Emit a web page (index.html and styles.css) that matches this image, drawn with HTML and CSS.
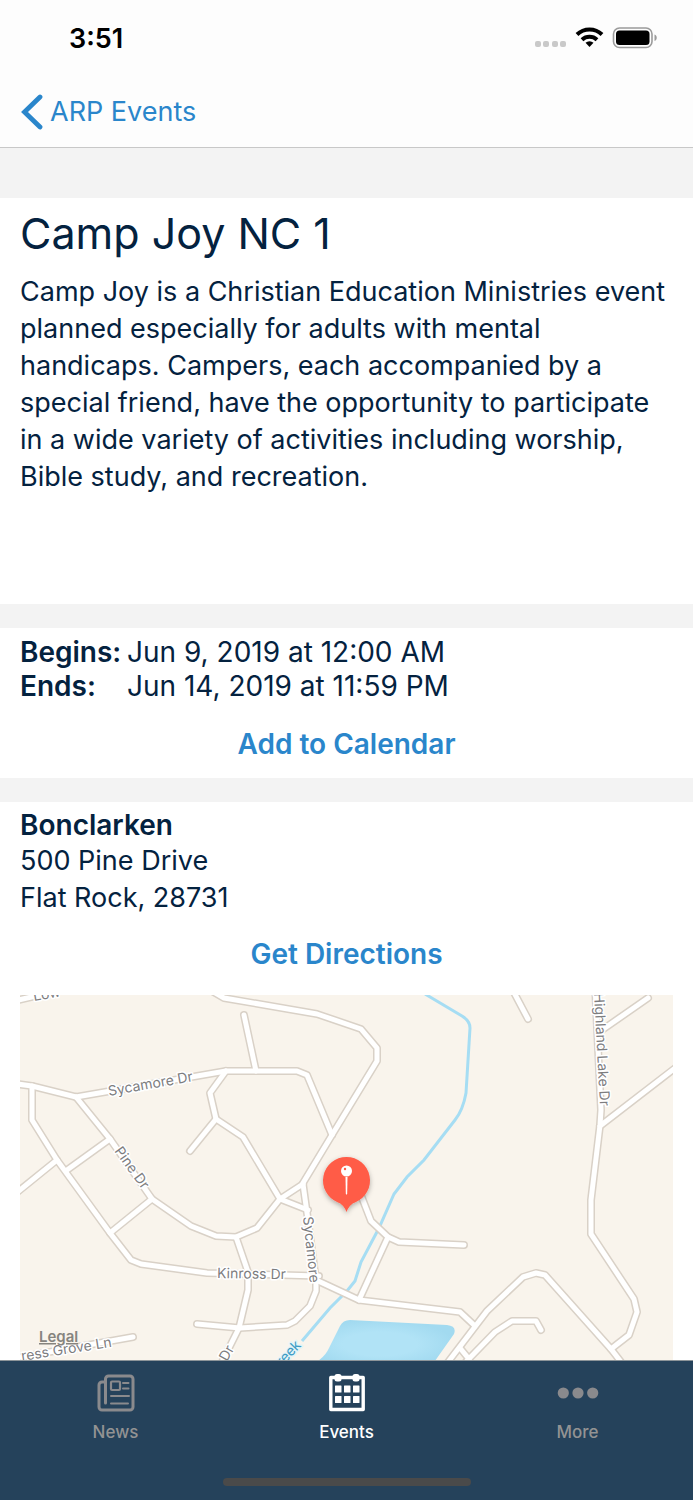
FILE: index.html
```html
<!DOCTYPE html>
<html lang="en">
<head>
    <meta charset="UTF-8">
    <meta name="viewport" content="width=device-width, initial-scale=1.0">
    <title>Camp Joy NC 1</title>
    <link rel="stylesheet" href="styles.css">
</head>
<body>
    <header class="top-bar">
        <div class="status-bar">
            <span class="time">3:51</span>
            <svg class="status-icons" width="124" height="24" viewBox="0 0 124 24" aria-hidden="true">
                <g fill="#c9c9c9">
                    <rect x="1" y="15" width="6" height="6" rx="2"/>
                    <rect x="9" y="15" width="6" height="6" rx="2"/>
                    <rect x="18" y="15" width="6" height="6" rx="2"/>
                    <rect x="26" y="15" width="6" height="6" rx="2"/>
                </g>
                <g fill="none" stroke="#000" stroke-width="4">
                    <path d="M43 8.5a18 18 0 0 1 25 0"/>
                    <path d="M48 13.8a11 11 0 0 1 15 0"/>
                </g>
                <path d="M55.500 21l-4-4.200a6 6 0 0 1 8 0z"/>
                <rect x="79.500" y="2" width="38.500" height="19.500" rx="6" fill="none" stroke="#9b9b9b" stroke-width="1.600"/>
                <rect x="82" y="4.500" width="33.500" height="14.500" rx="3.500"/>
                <path d="M120.500 8.500c3 1 3 5.500 0 6.500z" fill="#9b9b9b"/>
            </svg>
        </div>
        <nav class="nav-bar">
            <a href="#" class="back-link">
                <svg width="22" height="36" viewBox="0 0 22 36" aria-hidden="true">
                    <path d="M19 3L3.500 18L19 33" fill="none" stroke="#2a86cb" stroke-width="4.800" stroke-linecap="round" stroke-linejoin="miter"/>
                </svg>
                ARP Events
            </a>
        </nav>
    </header>

    <main>
        <section class="card about">
            <h1>Camp Joy NC 1</h1>
            <p>Camp Joy is a Christian Education Ministries event planned especially for adults with mental handicaps. Campers, each accompanied by a special friend, have the opportunity to participate in a wide variety of activities including worship, Bible study, and recreation.</p>
        </section>

        <section class="card dates">
            <dl>
                <dt>Begins:</dt>
                <dd>Jun 9, 2019 at 12:00 AM</dd>
                <dt>Ends:</dt>
                <dd>Jun 14, 2019 at 11:59 PM</dd>
            </dl>
            <button type="button" class="action">Add to Calendar</button>
        </section>

        <section class="card place">
            <h2>Bonclarken</h2>
            <address>500 Pine Drive<br>Flat Rock, 28731</address>
            <button type="button" class="action">Get Directions</button>

            <svg class="map" viewBox="20 995 653 366" preserveAspectRatio="xMidYMin slice" role="img" aria-label="Map">
                <defs>
                    <g id="roads">
                        <path d="M10 1002L70 988"/>
                        <path d="M205 987L224 998L317 1014L361 1029L377 1048V1061L332 1135L303 1183"/>
                        <path d="M244 1015L256 1071"/>
                        <path d="M10 1083L32 1086L76 1097L226 1071H297L307 1075L332 1135"/>
                        <path d="M32 1086V1120L57 1160L110 1233L131 1260L141 1264L207 1273L319 1276"/>
                        <path d="M10 1198L57 1160"/>
                        <path d="M76 1097L110 1139L152 1199L191 1226L216 1236L236 1237L257 1228L280 1199L303 1184"/>
                        <path d="M110 1139L67 1170"/>
                        <path d="M152 1199L110 1233"/>
                        <path d="M226 1071L210 1093L216 1119L190 1151"/>
                        <path d="M216 1119L243 1137L280 1199L308 1210"/>
                        <path d="M303 1184L308 1220L316 1280V1291L310 1306L295 1321L287 1325L240 1328L197 1324"/>
                        <path d="M236 1237L248 1272V1290L239 1328L218 1370"/>
                        <path d="M316 1280L359 1300L460 1312L475 1326"/>
                        <path d="M359 1300L388 1237"/>
                        <path d="M352 1172L371 1221L388 1237L399 1242L464 1245"/>
                        <path d="M510 985L528 1019"/>
                        <path d="M595 985L601 1110L600 1125L591 1200V1234L634 1299L637 1312L629 1335L611 1349"/>
                        <path d="M600 1126L683 1062"/>
                        <path d="M602 1030L648 998"/>
                        <path d="M442 1370L487 1311L523 1277L536 1273L545 1275L611 1349L628 1371"/>
                        <path d="M460 1348L469 1359"/>
                        <path d="M459 1369L495 1332L512 1321H536L541 1330"/>
                        <path d="M10 1359L133 1337"/>
                    </g>
                    <radialGradient id="pond">
                        <stop offset="0.500" stop-color="#b1e3f6"/>
                        <stop offset="1" stop-color="#a2daf0"/>
                    </radialGradient>
                    <filter id="pin-shadow" x="-30%" y="-30%" width="160%" height="160%">
                        <feDropShadow dx="0" dy="2" stdDeviation="2.500" flood-color="#000" flood-opacity="0.300"/>
                    </filter>
                </defs>

                <rect x="0" y="975" width="693" height="600" fill="#f9f4ec"/>
                <path d="M425 994L462 1016Q470 1021 470 1028L466 1093Q463 1110 455 1120L424 1160L407 1177L394 1194L379 1228L361 1262L355 1281L347 1291L330 1308L302 1341" fill="none" stroke="#a6ddf3" stroke-width="3"/>
                <path d="M350 1320L447 1325Q457 1326 454 1334L430 1368H305Q324 1360 329 1348L340 1326Q343 1320 350 1320Z" fill="url(#pond)"/>

                <use href="#roads" class="road-edge"/>
                <use href="#roads" class="road"/>

                <g class="street">
                    <text transform="translate(34 1001) rotate(-10)">Low</text>
                    <text transform="translate(109 1096) rotate(-10)">Sycamore Dr</text>
                    <text transform="translate(114 1151) rotate(54)">Pine Dr</text>
                    <text transform="translate(217 1278) rotate(1)">Kinross Dr</text>
                    <text transform="translate(303 1217) rotate(84)">Sycamore</text>
                    <text transform="translate(594 993) rotate(87)">Highland Lake Dr</text>
                    <text transform="translate(22 1361) rotate(-9)">ress Grove Ln</text>
                    <text transform="translate(227 1362) rotate(-61)">Dr</text>
                    <text class="water" transform="translate(282 1367) rotate(-47)">reek</text>
                </g>

                <g filter="url(#pin-shadow)">
                    <path d="M346.500 1157a23.500 23.500 0 0 1 9 45.200q-6 2-9 9.800q-3-7.800-9-9.800a23.500 23.500 0 0 1 9-45.200z" fill="#ff5b47"/>
                </g>
                <circle cx="346.500" cy="1171" r="5.500" fill="#fff"/>
                <circle cx="345" cy="1169" r="1.200" fill="#ff5b47"/>
                <path d="M345.500 1177h2l-.300 16.500-.700 1.500-.700-1.500z" fill="#fff"/>

                <a href="#"><text class="legal" x="39" y="1342">Legal</text></a>
            </svg>
        </section>
    </main>

    <nav class="tab-bar">
        <div class="tabs">
            <a href="#" class="tab">
                <svg width="38" height="38" viewBox="0 0 38 38" aria-hidden="true">
                    <g fill="none" stroke="#8a8a8d">
                        <path d="M8.500 29V5a3 3 0 0 1 3-3H33a3 3 0 0 1 3 3v28a3 3 0 0 1-3 3H5a3 3 0 0 1-3-3V11a3 3 0 0 1 3-3h3.500" stroke-width="3" stroke-linecap="round"/>
                        <rect x="14" y="7.500" width="9" height="8.500" rx="1" stroke-width="2.200"/>
                        <path d="M26 9h5.500M26 14.500h5.500M14 22h18M14 29.500h17" stroke-width="2" stroke-linecap="round"/>
                    </g>
                </svg>
                News
            </a>
            <a href="#" class="tab active" aria-current="page">
                <svg width="38" height="38" viewBox="0 0 38 38" aria-hidden="true">
                    <rect x="2.800" y="3.500" width="32.400" height="32" fill="none" stroke="#fff" stroke-width="3.400" stroke-linejoin="round"/>
                    <g fill="#fff">
                        <rect x="6.500" y="0" width="7" height="7.500" rx="2.500"/>
                        <rect x="24.500" y="0" width="7" height="7.500" rx="2.500"/>
                        <rect x="7" y="11.500" width="6.500" height="7" rx="0.500"/>
                        <rect x="16" y="11.500" width="6.500" height="7" rx="0.500"/>
                        <rect x="25" y="11.500" width="6.500" height="7" rx="0.500"/>
                        <rect x="7" y="22" width="6.500" height="7" rx="0.500"/>
                        <rect x="16" y="22" width="6.500" height="7" rx="0.500"/>
                        <rect x="25" y="22" width="6.500" height="7" rx="0.500"/>
                    </g>
                </svg>
                Events
            </a>
            <a href="#" class="tab">
                <svg width="42" height="38" viewBox="0 0 42 38" fill="#8a8a8d" aria-hidden="true">
                    <circle cx="6.300" cy="19" r="5.600"/>
                    <circle cx="21" cy="19" r="5.600"/>
                    <circle cx="35.700" cy="19" r="5.600"/>
                </svg>
                More
            </a>
        </div>
        <div class="home-indicator"></div>
    </nav>
</body>
</html>
```

FILE: styles.css
```css
* {
    box-sizing: border-box;
}

body {
    margin: 0;
    min-height: 100vh;
    display: flex;
    flex-direction: column;
    background-color: #f3f3f3;
    color: #04223f;
    font-family: Inter, "Liberation Sans", sans-serif;
    font-size: 27px;
    line-height: 37px;
}

a {
    text-decoration: none;
}

.top-bar {
    background-color: #fdfdfd;
    border-bottom: 1px solid #c8c8c8;
}

.status-bar {
    height: 76px;
    padding: 0 35px 0 69px;
    display: flex;
    justify-content: space-between;
    align-items: center;
}

.time {
    color: #000;
    font-weight: 600;
}

.nav-bar {
    height: 71px;
    padding: 0 21px;
    display: flex;
    align-items: center;
}

.back-link {
    display: flex;
    align-items: center;
    gap: 7px;
    color: #2a86cb;
}

main {
    flex: 1;
    display: flex;
    flex-direction: column;
    gap: 24px;
    padding-top: 50px;
}

.card {
    background-color: #fff;
    padding: 7px 20px 15px;
}

.about {
    padding-bottom: 109px;
}

h1 {
    margin: 0 0 12px;
    font-size: 43px;
    font-weight: 400;
    line-height: 56px;
}

p {
    margin: 0;
}

dl {
    margin: 0 0 23px;
    display: grid;
    grid-template-columns: 99px 1fr;
    column-gap: 8px;
    font-size: 28px;
    line-height: 34px;
}

dt {
    font-weight: 600;
}

dd {
    margin: 0;
}

h2 {
    margin: 0;
    font-size: 28px;
    font-weight: 600;
    line-height: 33px;
}

address {
    margin-bottom: 20px;
    font-style: normal;
}

.action {
    display: block;
    margin: 0 auto;
    padding: 0;
    border: 0;
    background: none;
    color: #2a86cb;
    font: inherit;
    font-size: 28px;
    font-weight: 600;
    cursor: pointer;
}

.place {
    flex: 1;
    display: flex;
    flex-direction: column;
    padding-bottom: 0;
}

.map {
    display: block;
    width: 100%;
    flex: 1 0 300px;
    height: 0;
    margin-top: 22px;
}

.road-edge,
.road {
    fill: none;
    stroke: #d9d1c7;
    stroke-width: 8px;
    stroke-linecap: round;
    stroke-linejoin: round;
}

.road {
    stroke: #fff;
    stroke-width: 5px;
}

.street {
    font-size: 14px;
    fill: #7d7d7f;
    stroke: #fff;
    stroke-width: 3px;
    stroke-linejoin: round;
    paint-order: stroke;
}

.water {
    fill: #3d9cc4;
    stroke: #e5f4f8;
}

.legal {
    font-size: 15px;
    font-weight: 600;
    fill: #86847f;
    text-decoration: underline;
}

.tab-bar {
    position: sticky;
    bottom: 0;
    height: 140px;
    padding: 13px 0 14px;
    display: flex;
    flex-direction: column;
    justify-content: space-between;
    align-items: center;
    background-color: #25425b;
    border-top: 1px solid #8d9499;
}

.tabs {
    align-self: stretch;
    display: grid;
    grid-template-columns: repeat(3, 1fr);
}

.tab {
    display: flex;
    flex-direction: column;
    align-items: center;
    gap: 8px;
    color: #939393;
    font-size: 17px;
    font-weight: 500;
    line-height: 24px;
}

.active {
    color: #fff;
}

.home-indicator {
    width: 248px;
    height: 8px;
    border-radius: 4px;
    background-color: #4a4a4a;
}
```
